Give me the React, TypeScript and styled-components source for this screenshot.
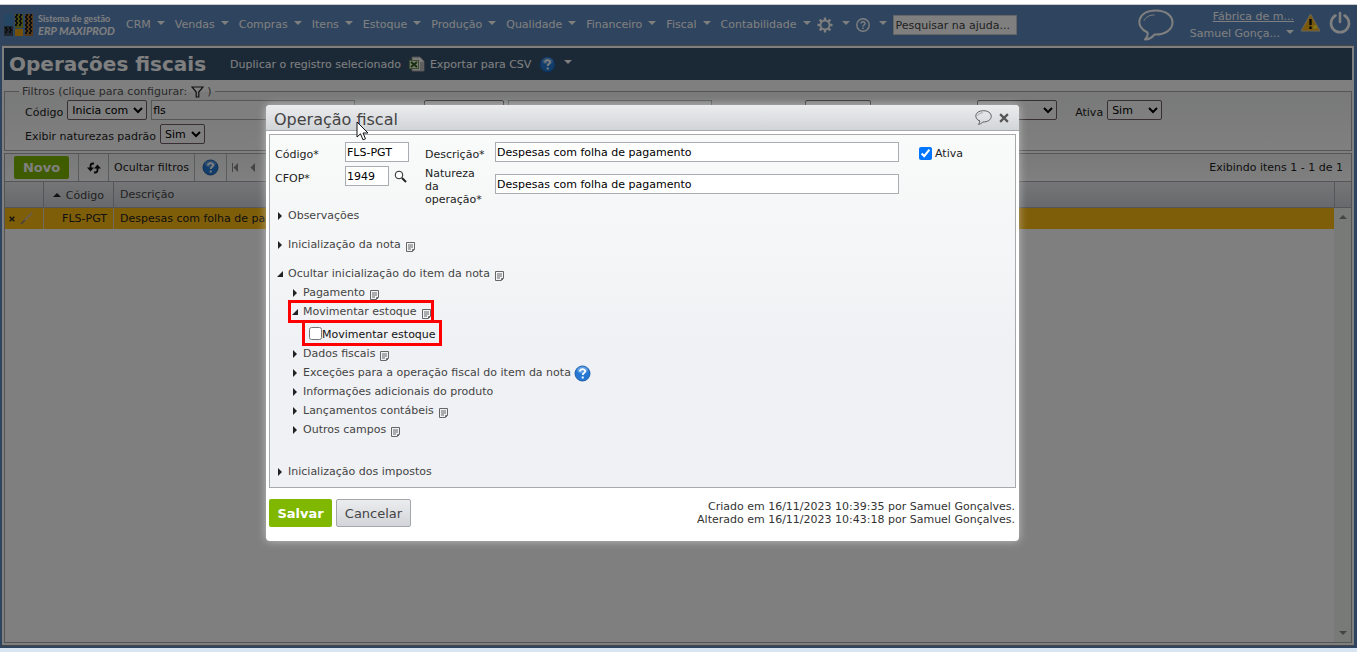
import React from "react";
import styled, { createGlobalStyle, css } from "styled-components";

const Global = createGlobalStyle`
  * { box-sizing: border-box; }
  html, body { margin: 0; padding: 0; }
  body, button, input, select { font-family: "DejaVu Sans", Verdana, sans-serif; font-size: 11px; }
  body { background: #fff; color: #222; }
`;

const Page = styled.div`
  min-height: 100vh;
  display: flex;
  flex-direction: column;
  border-top: 4px solid #fff;
  border-bottom: 4px solid #d9e4f3;
`;

const Stage = styled.div`
  position: relative;
  flex: 1;
  display: flex;
  flex-direction: column;
  background: #5e89be;
  border-top: 1px solid #ccc;
`;

const Nav = styled.nav`
  display: flex;
  align-items: center;
  height: 40px;
  padding: 0 6px 0 4px;
  color: #fff;
`;

const Brand = styled.a`
  display: flex;
  align-items: center;
  gap: 4px;
  width: 122px;
  color: #fff;
  text-decoration: none;
  font-family: Lato, sans-serif;
  font-weight: 700;
  font-size: 9px;
  line-height: 12px;
  white-space: nowrap;
  em { display: block; font-size: 11px; font-style: italic; font-weight: 700; }
`;

const MenuButton = styled.button`
  display: flex;
  align-items: center;
  gap: 6px;
  padding: 0 10px 0 0;
  border: 0;
  background: none;
  color: #fff;
  line-height: 16px;
`;

const MenuList = styled.div`
  display: flex;
  margin-right: -4px;
`;

const Caret = styled.i`
  display: block;
  margin-bottom: 4px;
  border: 4px solid transparent;
  border-top-color: currentColor;
  border-bottom: 0;
`;

const IconMenu = styled(MenuButton)`
  gap: 9px;
  padding-right: 6px;
`;

const HelpSearch = styled.input`
  width: 124px;
  height: 20px;
  padding: 0 2px;
  border: 1px solid #ccc;
  border-radius: 0;
  background: #fff;
  &::placeholder { color: #444; opacity: 1; }
`;

const Account = styled.div`
  display: flex;
  align-items: center;
  gap: 6px;
  margin-left: auto;
`;

const AccountIcons = styled.div`
  display: flex;
  align-items: center;
  gap: 8px;
  padding-bottom: 6px;
`;

const AccountNames = styled.div`
  display: flex;
  flex-direction: column;
  align-items: flex-end;
  margin-left: 10px;
  line-height: 17px;
  a { color: #fff; }
`;

const UserButton = styled(MenuButton)`
  padding: 0;
  line-height: 17px;
`;

const PlainButton = styled.button`
  display: flex;
  align-items: center;
  gap: 5px;
  padding: 0;
  border: 0;
  background: none;
  color: inherit;
`;

const Sheet = styled.main`
  flex: 1;
  display: flex;
  flex-direction: column;
  margin: 0 3px 2px 2px;
  padding: 2px;
  background: #fff;
  border-top: 1px solid #8f8f8f;
  border-bottom: 1px solid #8f8f8f;
`;

const TitleBar = styled.header`
  display: flex;
  align-items: center;
  height: 32px;
  padding-left: 5px;
  background: #36536f;
  color: #fff;
  h1 { margin: 0 24px 0 0; font-size: 20px; line-height: 24px; }
`;

const TitleActions = styled.div`
  display: flex;
  align-items: center;
  gap: 8px;
`;

const Filters = styled.fieldset`
  display: flex;
  flex-direction: column;
  gap: 4px;
  height: 66px;
  margin: 5px 0 2px;
  padding: 2px 20px 0;
  border: 1px solid #aaa;
  background: linear-gradient(#f1f3f2, #fff);
  legend { height: 13px; margin-left: -6px; padding: 0 3px; line-height: 13px; color: #555; }
  legend button { display: inline-flex; vertical-align: middle; }
`;

const FilterRow = styled.div`
  display: flex;
  gap: 4px;
  height: 20px;
`;

const FilterLabel = styled.label`
  line-height: 25px;
`;

const Select = styled.select<{ $w: number; $before?: number }>`
  width: ${(p) => p.$w}px;
  height: 20px;
  margin-left: ${(p) => p.$before ?? 0}px;
  padding: 0;
  border: 1px solid #6f5f66;
  border-radius: 2px;
  background: #fff;
  color: #000;
`;

const ActiveFilter = styled.div`
  display: flex;
  gap: 4px;
  margin-left: 14px;
`;

const fieldBox = css`
  height: 20px;
  padding: 0 1px;
  border: 1px solid #a9acb0;
  border-radius: 0;
  background: #fff;
  color: #000;
`;

const FilterInput = styled.input`
  ${fieldBox}
  width: 204px;
`;

const Grid = styled.section`
  flex: 1;
  display: flex;
  flex-direction: column;
  border: 1px solid #aaa;
`;

const Toolbar = styled.div`
  display: flex;
  align-items: center;
  height: 27px;
  padding: 0 8px 0 9px;
  background: linear-gradient(#f1f3f2, #fff);
`;

const ToolCell = styled.div<{ $w: number }>`
  display: flex;
  align-items: center;
  justify-content: center;
  width: ${(p) => p.$w}px;
  height: 27px;
  border-left: 1px solid #b4b6ba;
`;

const PagerGroup = styled.div`
  display: flex;
  gap: 10px;
`;

const actionSkin = css`
  border: 0;
  border-radius: 2px;
  background: #80b800;
  color: #fff;
  font-weight: 700;
  font-size: 13px;
`;

const NewButton = styled.button`
  ${actionSkin}
  width: 55px;
  height: 23px;
  margin-right: 9px;
  padding: 0;
`;

const Counter = styled.span`
  margin-left: auto;
`;

const GridBody = styled.div`
  flex: 1;
  display: flex;
`;

const TableArea = styled.div`
  flex: 1;
`;

const Table = styled.table`
  width: 100%;
  table-layout: fixed;
  border-collapse: separate;
  border-spacing: 0;
  th, td { padding: 0 6px; text-align: left; border-left: 1px solid #aaadb2; overflow: hidden; white-space: nowrap; }
  th:first-child, td:first-child { border-left: 0; padding: 0 4px; }
  th {
    height: 27px;
    border-top: 1px solid #aaadb2;
    border-bottom: 1px solid #aaadb2;
    background: linear-gradient(#ebecee, #d0d3d8);
    font-weight: 400;
    color: #444;
  }
  td { height: 21px; background: #ffbc12; border-left-color: #e0d6b8; }
  .code { text-align: right; }
`;

const RowTools = styled.span`
  display: flex;
  gap: 5px;
`;

const SortHead = styled.span`
  display: inline-flex;
  align-items: center;
  gap: 5px;
  margin-right: 3px;
`;

const SortMark = styled.i`
  border: 4px solid transparent;
  border-top: 0;
  border-bottom-color: #222;
`;

const ScrollTrack = styled.div`
  width: 17px;
  display: flex;
  flex-direction: column;
  align-items: center;
  background: #f1f4f1;
  color: #888;
`;

const TrackCap = styled.div`
  width: 17px;
  height: 27px;
  border: 1px solid #aaadb2;
  border-right: 0;
  background: linear-gradient(#ebecee, #d0d3d8);
`;

const TrackArrow = styled.i<{ $down?: boolean }>`
  border: 4px solid transparent;
  ${(p) =>
    p.$down
      ? "border-top-color: currentColor; border-bottom: 0; margin: auto 0 7px;"
      : "border-bottom-color: currentColor; border-top: 0; margin-top: 7px;"}
`;

const Shade = styled.div`
  position: absolute;
  inset: 0;
  background: rgba(0, 0, 0, 0.5);
`;

const Dialog = styled.section`
  position: absolute;
  top: 100px;
  left: 266px;
  width: 753px;
  border-radius: 4px;
  background: #fff;
  box-shadow: 0 0 8px rgba(255, 255, 255, 0.5);
`;

const DialogHeader = styled.header`
  display: flex;
  align-items: center;
  height: 26px;
  padding: 0 10px 0 8px;
  border-bottom: 1px solid #a5a9ad;
  border-radius: 4px 4px 0 0;
  background: linear-gradient(#ececee, #d1d5d8);
  h2 { flex: 1; margin: 0; padding-top: 5px; font-weight: 400; font-size: 16px; line-height: 20px; color: #444; }
`;

const DialogTools = styled.div`
  display: flex;
  align-items: center;
  gap: 7px;
  color: #555;
`;

const Panel = styled.div`
  margin: 3px 3px 0;
  height: 354px;
  padding: 7px 5px;
  border: 1px solid #a7a9ac;
  background: linear-gradient(#f9fbfa, #f0f1f4 60%);
`;

const FormGrid = styled.div`
  display: grid;
  grid-template-columns: 70px 80px 70px 424px auto;
  height: 64px;
`;

const FormColumn = styled.div`
  display: flex;
  flex-direction: column;
  gap: 4px;
`;

const FormLabel = styled.label<{ $wrap?: boolean }>`
  width: 60px;
  height: ${(p) => (p.$wrap ? 40 : 20)}px;
  padding-top: ${(p) => (p.$wrap ? 1 : 6)}px;
  line-height: 13px;
`;

const TextField = styled.input<{ $w: number }>`
  ${fieldBox}
  width: ${(p) => p.$w}px;
`;

const WithIcon = styled.div`
  display: flex;
  align-items: center;
  gap: 5px;
`;

const WideFields = styled(FormColumn)`
  gap: 12px;
`;

const CheckLabel = styled.label`
  display: flex;
  align-items: center;
  gap: 3px;
  height: 23px;
  input { width: 13px; height: 13px; margin: 0; }
`;

const Tree = styled.ul<{ $nested?: boolean }>`
  display: flex;
  flex-direction: column;
  gap: ${(p) => (p.$nested ? 0 : 10)}px;
  margin: 0;
  padding: 0 0 0 ${(p) => (p.$nested ? 15 : 0)}px;
  list-style: none;
`;

const TreeItem = styled.li<{ $last?: boolean }>`
  padding-top: ${(p) => (p.$last ? 13 : 0)}px;
`;

const TreeRow = styled.button<{ $marked?: boolean }>`
  position: relative;
  display: flex;
  align-items: center;
  height: 19px;
  padding: 0 0 0 2px;
  border: 0;
  background: none;
  color: #444;
  line-height: 19px;
  svg { flex: none; }
  ${(p) =>
    p.$marked &&
    "&::after { content: ''; position: absolute; inset: -2px -3px -2px -2px; border: 3px solid #f00; }"}
`;

const TreeMark = styled.span`
  display: flex;
  width: 11px;
`;

const RowIcon = styled.span<{ $gap: number }>`
  display: flex;
  padding-top: ${(p) => (p.$gap > 4 ? 4 : 1)}px;
  margin-left: ${(p) => p.$gap}px;
`;

const MarkedCheck = styled.label`
  position: relative;
  display: inline-flex;
  align-items: center;
  height: 23px;
  margin-left: 19px;
  padding-top: 4px;
  color: #111;
  vertical-align: top;
  input { width: 13px; height: 13px; margin: 0 0 2px; }
  &::after { content: ""; position: absolute; inset: -1px -6px -2px -7px; border: 3px solid #f00; }
`;

const DialogFooter = styled.footer`
  display: flex;
  align-items: flex-start;
  gap: 4px;
  height: 53px;
  padding: 11px 4px 0 3px;
`;

const SaveButton = styled.button`
  ${actionSkin}
  width: 63px;
  height: 28px;
  padding: 0;
`;

const CancelButton = styled.button`
  width: 75px;
  height: 28px;
  padding: 0;
  border: 1px solid #a3a7ac;
  border-radius: 2px;
  background: linear-gradient(#ebecee, #d2d5d9);
  color: #444;
  font-size: 13px;
`;

const Audit = styled.p`
  flex: 1;
  margin: 1px 0 0;
  text-align: right;
  line-height: 13px;
  color: #333;
`;

const Pointer = styled.svg`
  position: absolute;
  left: 90px;
  top: 16px;
`;

const HelpBall = () => (
  <svg width="17" height="17" viewBox="0 0 17 17">
    <circle cx="8.500" cy="8.500" r="7.500" fill="#2478d4" stroke="#1c5ca8" />
    <ellipse cx="8.500" cy="5" rx="5.500" ry="3.500" fill="#7db5ec" opacity=".6" />
    <path d="M6 6.600c0-3.300 5.200-3.200 5.200-.3 0 1.800-2.500 1.700-2.500 3.700" fill="none" stroke="#fff" strokeWidth="1.800" />
    <rect x="7.700" y="11.500" width="2" height="2" fill="#fff" />
  </svg>
);

const NoteIcon = () => (
  <svg width="9" height="10" viewBox="0 0 9 10" fill="none" stroke="#666">
    <path d="M.5.5h8v7l-2 2h-6zM2 3h5M2 5h5M2 7h3M6.500 9V7.500H8" />
  </svg>
);

const Bubble = ({ w, h, sw }: { w: number; h: number; sw: number }) => (
  <svg width={w} height={h} viewBox="0 0 36 32" fill="none" stroke="currentColor" strokeWidth={sw} strokeLinecap="round" strokeLinejoin="round">
    <path d="M9.500 23.500C-3.500 18 -1 1.500 18 1.500c9.500 0 16.500 5 16.500 12S27 26 16.500 25.500C14 28.500 11 30.500 7 30.500c2-2 3.200-4.500 2.500-7z" />
    <path d="M6 11.500c2-3.800 5.500-5.500 10-5.500" strokeWidth={sw / 2} />
  </svg>
);

const Logo = () => (
  <svg width="30" height="24" viewBox="0 0 30 24">
    <rect x="0" y="1" width="9" height="12" fill="#4d8fc6" />
    <rect x="0" y="13" width="9" height="10" fill="#3d4f60" />
    <rect x="11" y="1" width="8" height="14" fill="#8f9a20" />
    <rect x="11" y="16" width="8" height="7" fill="#e8a010" />
    <rect x="21" y="1" width="8" height="22" fill="#a8702e" />
    <path
      d="M12 2h2m2 0h2M11 4h2m2 0h2M12 6h2m2 0h2M11 8h2m2 0h2M12 10h2m2 0h2M11 12h2m2 0h2M22 2h2m2 0h2M21 4h2m2 0h2M22 6h2m2 0h2M21 8h2m2 0h2M22 10h2m2 0h2M21 12h2m2 0h2M22 14h2m2 0h2M21 16h2m2 0h2M22 18h2m2 0h2M21 20h2m2 0h2M1 15h2m2 0h2M2 17h2m2 0h2M1 19h2m2 0h2"
      stroke="#1c1c1c"
      strokeWidth="2"
    />
  </svg>
);

const Gear = () => (
  <svg width="16" height="16" viewBox="0 0 16 16" fill="none" stroke="currentColor">
    <circle cx="8" cy="8" r="4.500" strokeWidth="1.800" />
    <path d="M8 .5v2.700M8 12.800v2.700M.5 8h2.700M12.800 8h2.700M2.700 2.700l1.900 1.900M11.400 11.400l1.900 1.900M13.300 2.700l-1.900 1.900M4.600 11.400l-1.900 1.900" strokeWidth="2.400" />
  </svg>
);

const HelpRing = () => (
  <svg width="14" height="14" viewBox="0 0 14 14" fill="none" stroke="currentColor" strokeWidth="1.400">
    <circle cx="7" cy="7" r="6.200" />
    <path d="M5 5.500c0-2.400 4-2.400 4 0C9 7 7 7 7 8.500M7 9.600v1.300" />
  </svg>
);

const Warning = () => (
  <svg width="21" height="19" viewBox="0 0 21 19">
    <path d="M10.500 1 20 18H1z" fill="#f5b21a" stroke="#d8cfae" strokeLinejoin="round" />
    <path d="M10.500 6v6M10.500 13.500v2.500" stroke="#111" strokeWidth="2.400" />
    <circle cx="15" cy="14" r="2" fill="#ffee20" />
  </svg>
);

const Power = () => (
  <svg width="22" height="23" viewBox="0 0 22 23" fill="none" stroke="currentColor" strokeWidth="2.600" strokeLinecap="round">
    <path d="M6.500 4.500a9 9 0 1 0 9 0M11 2v9" />
  </svg>
);

const Sheets = () => (
  <svg width="16" height="16" viewBox="0 0 16 16">
    <path d="M3 1h8l4 4v10H3z" fill="#f4f4f4" stroke="#999" />
    <path d="M11 7h3M11 9h3M11 11h3M11 13h3" stroke="#888" />
    <rect x="0.500" y="4.500" width="9" height="8" fill="#eef4e4" stroke="#7ba05a" />
    <path d="m2 6 6 5M8 6l-6 5" stroke="#2c5a1c" strokeWidth="1.800" />
  </svg>
);

const Funnel = () => (
  <svg width="13" height="12" viewBox="0 0 13 12" fill="none" stroke="#222" strokeWidth="1.200">
    <path d="M1 1h11L7.800 6v5H5.200V6z" />
  </svg>
);

const Refresh = () => (
  <svg width="14" height="12" viewBox="0 0 14 12" fill="none" stroke="#111" strokeWidth="1.800">
    <path d="M7 1.500H6Q3.500 1.500 3.500 4v3M7 10.500h1Q10.500 10.500 10.500 8V5" />
    <path d="M0 5.500h7L3.500 9.500zM7 6.500h7L10.500 2.500z" fill="#111" stroke="none" />
  </svg>
);

const Pager = ({ first }: { first?: boolean }) => (
  <svg width="7" height="9" viewBox="0 0 7 9" fill="#888">
    <path d="M6 0v9L1.500 4.500z" />
    {first && <path d="M0 0h1v9H0z" />}
  </svg>
);

const Pencil = () => (
  <svg width="13" height="13" viewBox="0 0 13 13" strokeLinecap="round">
    <path d="M5 8 11.500 1.500" stroke="#d8bd90" strokeWidth="2" />
    <path d="m1.500 11.500 3-3" stroke="#8d8478" strokeWidth="1.600" />
  </svg>
);

const Cross = ({ size, w }: { size: number; w: number }) => (
  <svg width={size} height={size} viewBox="0 0 9 9" stroke="currentColor" strokeWidth={w}>
    <path d="m1 1 7 7M8 1 1 8" />
  </svg>
);

const Magnifier = () => (
  <svg width="13" height="13" viewBox="0 0 13 13" fill="none" stroke="#222">
    <circle cx="5" cy="5" r="3.800" fill="#fff" />
    <path d="m8 8 4 4" strokeWidth="2" />
  </svg>
);

const Triangle = ({ open }: { open?: boolean }) => (
  <svg width="7" height="8" viewBox="0 0 7 8" fill="#222">
    {open ? <path d="M6 1v6H0z" /> : <path d="M1 0v8l4-4z" />}
  </svg>
);

const menus = ["CRM", "Vendas", "Compras", "Itens", "Estoque", "Produção", "Qualidade", "Financeiro", "Fiscal", "Contabilidade"];

type NodeProps = { text: string; note?: boolean; help?: boolean; open?: boolean; marked?: boolean };

const Node = ({ text, note, help, open, marked }: NodeProps) => (
  <TreeRow type="button" aria-expanded={!!open} $marked={marked}>
    <TreeMark><Triangle open={open} /></TreeMark>
    {text}
    {note && <RowIcon $gap={5}><NoteIcon /></RowIcon>}
    {help && <RowIcon $gap={3}><HelpBall /></RowIcon>}
  </TreeRow>
);

export default function App() {
  return (
    <Page>
      <Global />
      <Stage>
        <Nav>
          <Brand href="#"><Logo /><span>Sistema de gestão<em>ERP MAXIPROD</em></span></Brand>
          <MenuList>
            {menus.map((m) => (
              <MenuButton key={m} type="button">{m}<Caret /></MenuButton>
            ))}
          </MenuList>
          <IconMenu type="button" aria-label="Configurações"><Gear /><Caret /></IconMenu>
          <IconMenu type="button" aria-label="Ajuda"><HelpRing /><Caret /></IconMenu>
          <HelpSearch placeholder="Pesquisar na ajuda..." aria-label="Pesquisar na ajuda" />
          <Account>
            <PlainButton type="button" aria-label="Mensagens"><Bubble w={36} h={32} sw={2} /></PlainButton>
            <AccountNames>
              <a href="#">Fábrica de m...</a>
              <UserButton type="button">Samuel Gonça...<Caret /></UserButton>
            </AccountNames>
            <AccountIcons>
              <Warning />
              <PlainButton type="button" aria-label="Sair"><Power /></PlainButton>
            </AccountIcons>
          </Account>
        </Nav>

        <Sheet>
          <TitleBar>
            <h1>Operações fiscais</h1>
            <TitleActions>
              <PlainButton type="button">Duplicar o registro selecionado</PlainButton>
              <PlainButton type="button"><Sheets />Exportar para CSV</PlainButton>
              <PlainButton type="button" aria-label="Ajuda"><HelpBall /></PlainButton>
              <PlainButton type="button" aria-label="Mais"><Caret /></PlainButton>
            </TitleActions>
          </TitleBar>

          <Filters>
            <legend>Filtros (clique para configurar: <PlainButton type="button" aria-label="Configurar"><Funnel /></PlainButton> )</legend>
            <FilterRow>
              <FilterLabel htmlFor="f-cod">Código</FilterLabel>
              <Select $w={80} aria-label="Condição"><option>Inicia com</option></Select>
              <FilterInput id="f-cod" defaultValue="fls" />
              <Select $w={80} $before={65} aria-label="Condição"><option /></Select>
              <FilterInput aria-label="Filtro" />
              <Select $w={66} $before={89} aria-label="Filtro"><option /></Select>
              <Select $w={80} $before={102} aria-label="Filtro"><option /></Select>
              <ActiveFilter>
                <FilterLabel htmlFor="f-ativa">Ativa</FilterLabel>
                <Select id="f-ativa" $w={55}><option>Sim</option></Select>
              </ActiveFilter>
            </FilterRow>
            <FilterRow>
              <FilterLabel htmlFor="f-nat">Exibir naturezas padrão</FilterLabel>
              <Select id="f-nat" $w={45}><option>Sim</option></Select>
            </FilterRow>
          </Filters>

          <Grid>
            <Toolbar>
              <NewButton type="button">Novo</NewButton>
              <ToolCell $w={30}><PlainButton type="button" aria-label="Atualizar"><Refresh /></PlainButton></ToolCell>
              <ToolCell $w={86}><PlainButton type="button">Ocultar filtros</PlainButton></ToolCell>
              <ToolCell $w={32}><PlainButton type="button" aria-label="Ajuda"><HelpBall /></PlainButton></ToolCell>
              <ToolCell $w={34}>
                <PagerGroup>
                  <PlainButton type="button" aria-label="Primeira"><Pager first /></PlainButton>
                  <PlainButton type="button" aria-label="Anterior"><Pager /></PlainButton>
                </PagerGroup>
              </ToolCell>
              <Counter>Exibindo itens 1 - 1 de 1</Counter>
            </Toolbar>
            <GridBody>
              <TableArea>
                <Table>
                  <colgroup><col width="38" /><col width="70" /><col /></colgroup>
                  <thead>
                    <tr>
                      <th />
                      <th className="code"><SortHead><SortMark />Código</SortHead></th>
                      <th>Descrição</th>
                    </tr>
                  </thead>
                  <tbody>
                    <tr>
                      <td><RowTools><PlainButton type="button" aria-label="Excluir"><Cross size={6} w={2} /></PlainButton><PlainButton type="button" aria-label="Editar"><Pencil /></PlainButton></RowTools></td>
                      <td className="code">FLS-PGT</td>
                      <td>Despesas com folha de pagamento</td>
                    </tr>
                  </tbody>
                </Table>
              </TableArea>
              <ScrollTrack>
                <TrackCap />
                <TrackArrow />
                <TrackArrow $down />
              </ScrollTrack>
            </GridBody>
          </Grid>
        </Sheet>

        <Shade />

        <Dialog role="dialog" aria-label="Operação fiscal">
          <DialogHeader>
            <h2>Operação fiscal</h2>
            <DialogTools>
              <PlainButton type="button" aria-label="Comentários"><Bubble w={17} h={15} sw={2} /></PlainButton>
              <PlainButton type="button" aria-label="Fechar"><Cross size={10} w={2} /></PlainButton>
            </DialogTools>
          </DialogHeader>
          <Panel>
            <FormGrid>
              <FormColumn>
                <FormLabel htmlFor="codigo">Código*</FormLabel>
                <FormLabel htmlFor="cfop">CFOP*</FormLabel>
              </FormColumn>
              <FormColumn>
                <TextField id="codigo" $w={64} defaultValue="FLS-PGT" />
                <WithIcon>
                  <TextField id="cfop" $w={44} defaultValue="1949" />
                  <PlainButton type="button" aria-label="Buscar"><Magnifier /></PlainButton>
                </WithIcon>
              </FormColumn>
              <FormColumn>
                <FormLabel htmlFor="descricao">Descrição*</FormLabel>
                <FormLabel htmlFor="natureza" $wrap>Natureza da operação*</FormLabel>
              </FormColumn>
              <WideFields>
                <TextField id="descricao" $w={404} defaultValue="Despesas com folha de pagamento" />
                <TextField id="natureza" $w={404} defaultValue="Despesas com folha de pagamento" />
              </WideFields>
              <CheckLabel><input type="checkbox" defaultChecked />Ativa</CheckLabel>
            </FormGrid>
            <Tree>
              <TreeItem><Node text="Observações" /></TreeItem>
              <TreeItem><Node text="Inicialização da nota" note /></TreeItem>
              <TreeItem>
                <Node text="Ocultar inicialização do item da nota" note open />
                <Tree $nested>
                  <TreeItem><Node text="Pagamento" note /></TreeItem>
                  <TreeItem>
                    <Node text="Movimentar estoque" note open marked />
                    <MarkedCheck><input type="checkbox" />Movimentar estoque</MarkedCheck>
                  </TreeItem>
                  <TreeItem><Node text="Dados fiscais" note /></TreeItem>
                  <TreeItem><Node text="Exceções para a operação fiscal do item da nota" help /></TreeItem>
                  <TreeItem><Node text="Informações adicionais do produto" /></TreeItem>
                  <TreeItem><Node text="Lançamentos contábeis" note /></TreeItem>
                  <TreeItem><Node text="Outros campos" note /></TreeItem>
                </Tree>
              </TreeItem>
              <TreeItem $last><Node text="Inicialização dos impostos" /></TreeItem>
            </Tree>
          </Panel>
          <DialogFooter>
            <SaveButton type="button">Salvar</SaveButton>
            <CancelButton type="button">Cancelar</CancelButton>
            <Audit>
              Criado em 16/11/2023 10:39:35 por Samuel Gonçalves.<br />
              Alterado em 16/11/2023 10:43:18 por Samuel Gonçalves.
            </Audit>
          </DialogFooter>
          <Pointer width="13" height="20" viewBox="0 0 13 20">
            <path d="M1 1v15l3.500-3.200 2.500 6 2.500-1-2.500-5.800H12z" fill="#fff" stroke="#111" />
          </Pointer>
        </Dialog>
      </Stage>
    </Page>
  );
}
